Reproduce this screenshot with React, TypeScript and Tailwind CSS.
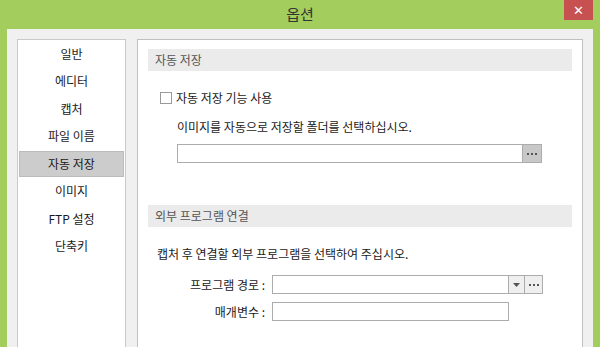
const font = { fontFamily: '"Noto Sans CJK KR", "Noto Sans", sans-serif' };

const navItems = ["일반", "에디터", "캡처", "파일 이름", "자동 저장", "이미지", "FTP 설정", "단축키"];

function SectionHeader({ title }: { title: string }) {
  return (
    <div className="mx-[10px] h-[22px] bg-[#ebebeb] flex items-center pl-[7px] text-[12px] text-[#555]">
      {title}
    </div>
  );
}

function Dots() {
  return (
    <svg width="10" height="2" viewBox="0 0 10 2">
      <rect x="0" y="0" width="2" height="2" fill="#555" />
      <rect x="4" y="0" width="2" height="2" fill="#555" />
      <rect x="8" y="0" width="2" height="2" fill="#555" />
    </svg>
  );
}

export default function App() {
  const selected = "자동 저장";
  return (
    <div className="w-[600px] h-[347px] bg-[#a3cd5d] flex flex-col overflow-hidden text-[#1a1a1a]" style={font}>
      <div className="relative h-[29px] shrink-0 flex items-center justify-center">
        <span className="text-[15px] text-[#333] pb-[1px]">옵션</span>
        <div className="absolute right-[7px] top-0 w-[29px] h-[20px] bg-[#c75050] flex items-center justify-center">
          <span className="text-white text-[13px] font-bold leading-none" style={{ fontFamily: '"DejaVu Sans", sans-serif' }}>✕</span>
        </div>
      </div>

      <div className="flex-1 mx-[7px] bg-[#f0f0f0] flex pt-[10px] pl-[10px] pr-[10px] gap-[11px]">
        {/* left nav */}
        <div className="w-[109px] h-[320px] bg-white border border-[#c9c9c9] flex flex-col px-[1px]">
          {navItems.map((item) => (
            <div key={item} className="h-[27.5px] flex items-center justify-center shrink-0">
              {item === selected ? (
                <div className="w-full h-[26px] bg-[#cccccc] border border-[#bcbcbc] flex items-center justify-center text-[12px]">
                  {item}
                </div>
              ) : (
                <span className="text-[12px]">{item}</span>
              )}
            </div>
          ))}
        </div>

        {/* content panel */}
        <div className="flex-1 h-[320px] bg-white border border-[#c0c0c0] flex flex-col">
          <div className="mt-[9px]">
            <SectionHeader title="자동 저장" />
          </div>

          <div className="mt-[19px] ml-[22px] h-[16px] flex items-center gap-[4px] text-[12px]">
            <div className="w-[12px] h-[12px] border border-[#999] bg-white" />
            <span>자동 저장 기능 사용</span>
          </div>

          <div className="mt-[13px] ml-[39px] h-[16px] flex items-center text-[12px]">
            이미지를 자동으로 저장할 폴더를 선택하십시오.
          </div>

          <div className="mt-[9px] ml-[39px] h-[19px] flex">
            <div className="w-[346px] h-full border border-[#acacac] bg-white" />
            <div className="w-[19px] h-full bg-[#c8c8c8] border border-[#acacac] border-l-0 flex items-center justify-center">
              <Dots />
            </div>
          </div>

          <div className="mt-[42px]">
            <SectionHeader title="외부 프로그램 연결" />
          </div>

          <div className="mt-[19px] ml-[19px] h-[16px] flex items-center text-[12px]">
            캡처 후 연결할 외부 프로그램을 선택하여 주십시오.
          </div>

          <div className="mt-[13px] h-[19px] flex items-center">
            <div className="w-[127px] text-right text-[12px]">프로그램 경로 :</div>
            <div className="ml-[7px] flex h-full">
              <div className="w-[237px] h-full border border-[#acacac] bg-white" />
              <div className="w-[16px] h-full bg-[#efefef] border border-[#acacac] border-l-0 flex items-center justify-center">
                <svg width="7" height="4" viewBox="0 0 7 4">
                  <path d="M0 0 L7 0 L3.5 4 Z" fill="#555" />
                </svg>
              </div>
              <div className="w-[18px] h-full bg-[#efefef] border border-[#acacac] border-l-0 flex items-center justify-center">
                <Dots />
              </div>
            </div>
          </div>

          <div className="mt-[8px] h-[19px] flex items-center">
            <div className="w-[127px] text-right text-[12px]">매개변수 :</div>
            <div className="ml-[7px] w-[237px] h-full border border-[#acacac] bg-white" />
          </div>
        </div>
      </div>
    </div>
  );
}
